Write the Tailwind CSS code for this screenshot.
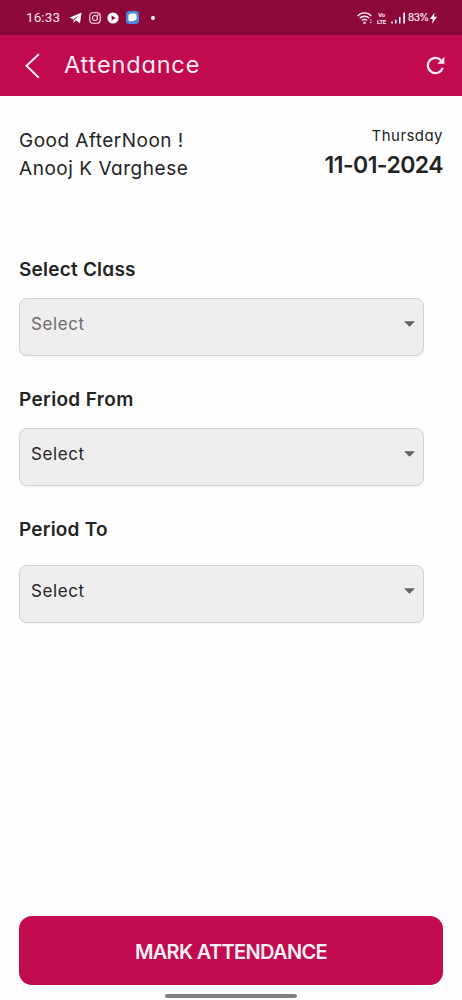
<!DOCTYPE html>
<html lang="en">
<head>
<meta charset="utf-8">
<title>Attendance</title>
<script src="https://cdn.jsdelivr.net/npm/@tailwindcss/browser@4"></script>
</head>
<body class="bg-[#fefefe]">
<div class="flex h-[1000px] w-[462px] flex-col overflow-hidden bg-[#fefefe] font-['Inter',sans-serif] text-[#242424] whitespace-nowrap [font-feature-settings:'cv11']">

  <!-- Status bar -->
  <div class="flex h-[35px] shrink-0 items-center justify-between bg-[#8d083a] pr-[25px] pl-[26px] text-[#fbe6ee]">
    <div class="flex items-center">
      <span class="w-[43px] font-['Roboto',sans-serif] text-[13.5px] leading-none tracking-[0.1px]">16:33</span>
      <svg class="h-[12px] w-[13px]" viewBox="0 0 13 12" fill="#fff"><path d="M12.600 .6 .4 5.800l4 1.400L10.400 3.200 5.700 7.500l5.300 3.700z"/><path d="M4.600 7v4l2-2.400z"/></svg>
      <svg class="ml-[7px] h-[12px] w-[12px]" viewBox="0 0 12 12" fill="none" stroke="#fbe6ee" stroke-width="1.1"><rect x=".8" y=".8" width="10.400" height="10.400" rx="3"/><circle cx="6" cy="6" r="2.500"/><circle cx="8.900" cy="3.100" r=".3"/></svg>
      <svg class="ml-[6px] h-[12px] w-[12px]" viewBox="0 0 12 12"><circle cx="6" cy="6" r="5.600" fill="#fff"/><path d="M4.600 3.600v4.800l4-2.400z" fill="#8d083a"/></svg>
      <svg class="ml-[7px] h-[13px] w-[13px]" viewBox="0 0 13 13"><rect width="13" height="13" rx="3.500" fill="#4d86d8"/><path d="M5 2.600h3.800a1.800 1.800 0 0 1 1.800 1.800v3a2 2 0 0 1-1.800 2L4.200 10.600a1.800 1.800 0 0 1-1.800-1.800V6A3.200 3.200 0 0 1 5 2.600z" fill="#fff"/></svg>
      <span class="ml-[12px] size-[4px] rounded-full bg-white"></span>
    </div>
    <div class="flex items-center">
      <svg class="h-[12px] w-[16px]" viewBox="0 0 16 12" fill="none" stroke="#fbe6ee" stroke-width="1.400"><path d="M.6 3.900C4.500-.1 10.500-.1 14.400 3.900M2.700 6.300c2.700-2.700 6.900-2.700 9.600 0M4.900 8.600c1.500-1.500 3.700-1.500 5.200 0"/><circle cx="7.500" cy="10.700" r=".5"/><path d="M12.400 8.600l1.300-1.300L15 8.600zM12.400 10l1.300 1.300L15 10z" fill="#fbe6ee" stroke="none"/></svg>
      <span class="ml-[4px] flex w-[9px] flex-col items-center font-['Roboto',sans-serif] text-[6px] leading-[7px] font-bold tracking-[-0.3px]"><span>Vo</span><span>LTE</span></span>
      <svg class="ml-[5px] h-[12px] w-[15px]" viewBox="0 0 15 12" fill="#fff"><rect x=".3" y="9.500" width="1.500" height="2"/><rect x="4" y="7.800" width="1.500" height="3.700"/><rect x="8" y="5" width="1.500" height="6.500"/><rect x="12.300" y=".5" width="1.700" height="11"/></svg>
      <span class="ml-[2px] w-[20px] -translate-y-px text-[10px] leading-none tracking-[-0.500px] [-webkit-text-stroke:0.2px]">83%</span>
      <svg class="ml-[2px] h-[12px] w-[7px]" viewBox="0 0 7 12" fill="#fff"><path d="M4.500 .5 0 6.900h2.800L2 11.800l5-7H4z"/></svg>
    </div>
  </div>

  <!-- App bar -->
  <div class="flex h-[61px] shrink-0 items-center bg-[#c10a4f] pr-[17px] pl-[25px] text-[#fdebf2]">
    <svg class="h-[26px] w-[15px]" viewBox="0 0 15 26" fill="none" stroke="currentColor" stroke-width="2"><path d="M13.800 1.200 1.500 12.800l12.300 12"/></svg>
    <h1 class="ml-[24px] -translate-y-px text-[23.5px] leading-none tracking-[0.85px]">Attendance</h1>
    <svg class="ml-auto h-[19px] w-[19px]" viewBox="0 0 19 19" fill="none" stroke="currentColor" stroke-width="2.300"><path d="M16.700 11.800A7.600 7.600 0 1 1 15 4.200"/><path d="M18.400 .8v7h-7z" fill="currentColor" stroke="none"/></svg>
  </div>

  <main class="flex flex-1 flex-col px-[19px]">
    <div class="flex h-[156px] shrink-0 justify-between pt-[30px]">
      <div class="pt-px text-[19px] leading-[28px]">
        <p class="tracking-[0.48px]">Good AfterNoon !</p>
        <p class="tracking-[0.53px]">Anooj K Varghese</p>
      </div>
      <div class="flex flex-col items-end">
        <p class="h-[25px] text-[15px] leading-[20px] tracking-[0.450px]">Thursday</p>
        <p class="text-[23px] leading-[29px] font-semibold tracking-[-0.55px]">11-01-2024</p>
      </div>
    </div>

    <section>
      <h2 class="h-[46px] text-[19px] leading-[36px] font-semibold tracking-[0.22px]">Select Class</h2>
      <div class="flex h-[58px] w-[405px] items-center justify-between rounded-[8px] border border-[#d2d1d2] bg-[#efedee] pr-[8px] pb-[6px] pl-[11px] shadow-xs">
        <span class="text-[17px] leading-none tracking-[0.600px] text-[#6c6b6c]">Select</span>
        <svg class="h-[6px] w-[11px]" viewBox="0 0 11 6" fill="#636263"><path d="M0 .3h11L5.500 5.700z"/></svg>
      </div>
    </section>

    <section class="mt-[26px]">
      <h2 class="h-[46px] text-[19px] leading-[36px] font-semibold tracking-[0.35px]">Period From</h2>
      <div class="flex h-[58px] w-[405px] items-center justify-between rounded-[8px] border border-[#d2d1d2] bg-[#efedee] pr-[8px] pb-[6px] pl-[11px] shadow-xs">
        <span class="text-[17px] leading-none tracking-[0.600px]">Select</span>
        <svg class="h-[6px] w-[11px]" viewBox="0 0 11 6" fill="#636263"><path d="M0 .3h11L5.500 5.700z"/></svg>
      </div>
    </section>

    <section class="mt-[26px]">
      <h2 class="h-[53px] text-[19px] leading-[36px] font-semibold tracking-[0.2px]">Period To</h2>
      <div class="flex h-[58px] w-[405px] items-center justify-between rounded-[8px] border border-[#d2d1d2] bg-[#efedee] pr-[8px] pb-[6px] pl-[11px] shadow-xs">
        <span class="text-[17px] leading-none tracking-[0.600px]">Select</span>
        <svg class="h-[6px] w-[11px]" viewBox="0 0 11 6" fill="#636263"><path d="M0 .3h11L5.500 5.700z"/></svg>
      </div>
    </section>

    <button class="mt-auto h-[69px] w-[424px] shrink-0 rounded-[13px] bg-[#c10a4f] pt-[2px] text-[20px] font-semibold tracking-[-0.65px] text-[#fff0f6]">MARK ATTENDANCE</button>
    <div class="mt-[9px] mb-[2px] ml-[146px] h-[4px] w-[132px] shrink-0 rounded-full bg-[#818181]"></div>
  </main>
</div>
</body>
</html>
